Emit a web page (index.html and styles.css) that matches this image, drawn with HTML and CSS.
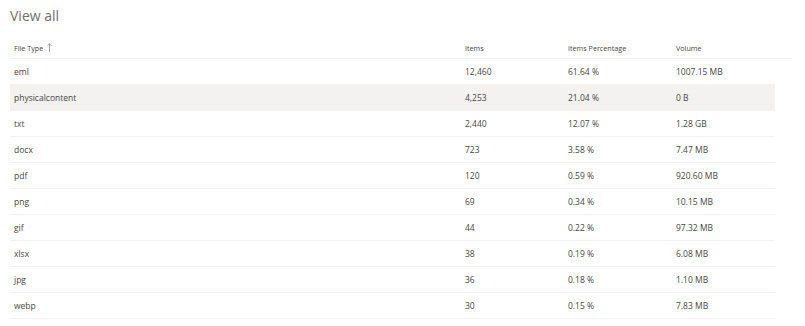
FILE: index.html
```html
<!DOCTYPE html>
<html lang="en">
<head>
  <meta charset="UTF-8">
  <title>View all</title>
  <link rel="stylesheet" href="styles.css">
</head>
<body>
  <div class="panel">
    <h1 class="title">View all</h1>

    <div class="table">
      <div class="row head">
        <div class="cell">File Type
          <svg class="sort" width="5" height="9" viewBox="0 0 5 9"><path d="M2.5 9V0.8M0.4 2.9L2.5 0.8L4.6 2.9" fill="none" stroke="#8a8886" stroke-width="0.8"/></svg>
        </div>
        <div class="cell">Items</div>
        <div class="cell">Items Percentage</div>
        <div class="cell">Volume</div>
      </div>

      <div class="row"><div class="cell">eml</div><div class="cell">12,460</div><div class="cell">61.64 %</div><div class="cell">1007.15 MB</div></div>
      <div class="row hover"><div class="cell">physicalcontent</div><div class="cell">4,253</div><div class="cell">21.04 %</div><div class="cell">0 B</div></div>
      <div class="row"><div class="cell">txt</div><div class="cell">2,440</div><div class="cell">12.07 %</div><div class="cell">1.28 GB</div></div>
      <div class="row"><div class="cell">docx</div><div class="cell">723</div><div class="cell">3.58 %</div><div class="cell">7.47 MB</div></div>
      <div class="row"><div class="cell">pdf</div><div class="cell">120</div><div class="cell">0.59 %</div><div class="cell">920.60 MB</div></div>
      <div class="row"><div class="cell">png</div><div class="cell">69</div><div class="cell">0.34 %</div><div class="cell">10.15 MB</div></div>
      <div class="row"><div class="cell">gif</div><div class="cell">44</div><div class="cell">0.22 %</div><div class="cell">97.32 MB</div></div>
      <div class="row"><div class="cell">xlsx</div><div class="cell">38</div><div class="cell">0.19 %</div><div class="cell">6.08 MB</div></div>
      <div class="row"><div class="cell">jpg</div><div class="cell">36</div><div class="cell">0.18 %</div><div class="cell">1.10 MB</div></div>
      <div class="row"><div class="cell">webp</div><div class="cell">30</div><div class="cell">0.15 %</div><div class="cell">7.83 MB</div></div>
    </div>
  </div>
</body>
</html>
```

FILE: styles.css
```css
* {
  box-sizing: border-box;
}

body {
  margin: 0;
  background: #fff;
  font-family: "Open Sans", "Liberation Sans", sans-serif;
  color: #484644;
}

.panel {
  padding: 4px 13px 0 10px;
}

.title {
  margin: 0;
  height: 30px;
  font-size: 14px;
  font-weight: 400;
  line-height: 24px;
  color: #707070;
}

.table {
  display: flex;
  flex-direction: column;
}

.row {
  display: grid;
  grid-template-columns: 451px 103px 108px 1fr;
  align-items: center;
  height: 26px;
  margin-right: 17px;
  border-bottom: 1px solid #f3f2f1;
  font-size: 8.5px;
}

.row.head {
  height: 25px;
  padding-top: 3px;
  margin-right: 0;
  font-size: 7.2px;
  color: #484644;
}

.row.hover {
  background: #f3f2f1;
}

.cell {
  padding-left: 4px;
  white-space: nowrap;
}

.sort {
  margin-left: 2px;
  vertical-align: -1px;
}
```
